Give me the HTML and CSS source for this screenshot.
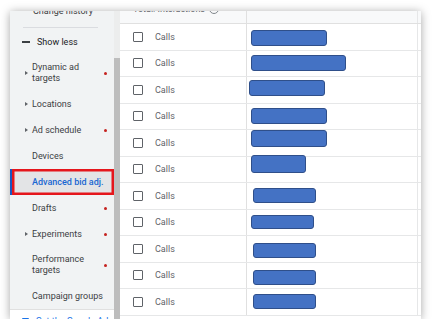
FILE: index.html
```html
<!DOCTYPE html>
<html lang="en">
<head>
  <meta charset="UTF-8">
  <title>Advanced bid adjustments</title>
  <link rel="stylesheet" href="styles.css">
</head>
<body>
  <div class="frame">
    <!-- Left navigation -->
    <nav class="sidenav">
      <ul class="nav-list">
        <li class="nav-item"><span class="nav-text">Change history</span></li>
        <li class="nav-divider"></li>
        <li class="nav-item toggle"><span class="dash"></span><span class="nav-text">Show less</span></li>
        <li class="nav-item"><span class="arrow"></span><span class="nav-text">Dynamic ad targets</span><span class="dot"></span></li>
        <li class="nav-item"><span class="arrow"></span><span class="nav-text">Locations</span></li>
        <li class="nav-item"><span class="arrow"></span><span class="nav-text">Ad schedule</span><span class="dot"></span></li>
        <li class="nav-item"><span class="slot"></span><span class="nav-text">Devices</span></li>
        <li class="nav-item active"><span class="slot"></span><span class="nav-text">Advanced bid adj.</span></li>
        <li class="nav-item"><span class="slot"></span><span class="nav-text">Drafts</span><span class="dot"></span></li>
        <li class="nav-item"><span class="arrow"></span><span class="nav-text">Experiments</span><span class="dot"></span></li>
        <li class="nav-item"><span class="slot"></span><span class="nav-text">Performance targets</span><span class="dot"></span></li>
        <li class="nav-item"><span class="slot"></span><span class="nav-text">Campaign groups</span></li>
      </ul>
      <div class="nav-footer">
        <span class="app-icon"></span>
        <span class="footer-text">Get the Google Ads app</span>
      </div>
    </nav>

    <div class="scrollbar"><div class="thumb"></div></div>

    <!-- Table -->
    <div class="table">
      <div class="table-head">
        <div class="cell-name head-name">Total: Interactions <span class="info">?</span></div>
        <div class="cell-bar"></div>
      </div>
      <div id="rows"></div>
    </div>
  </div>

  <script>
    // [offset-left, offset-top, width, height] of each redacted value
    const bars = [
      [4, 6, 76, 16],
      [4, 4.5, 95, 16],
      [2, 3, 76, 16],
      [4, 4.5, 76, 16],
      [4, 0, 76, 17],
      [4, -1.5, 55, 18],
      [6, 5, 63, 15],
      [4, 5.5, 63, 14],
      [6, 7, 63, 15],
      [6, 7.5, 63, 15],
      [6, 5, 63, 15]
    ];
    const rows = document.getElementById('rows');
    bars.forEach(b => {
      const row = document.createElement('div');
      row.className = 'row';
      row.innerHTML =
        '<div class="cell-name"><span class="checkbox"></span><span class="label">Calls</span></div>' +
        '<div class="cell-bar"><div class="bar" style="margin-left:' + b[0] + 'px;margin-top:' + b[1] +
        'px;width:' + b[2] + 'px;height:' + b[3] + 'px"></div></div>';
      rows.appendChild(row);
    });
  </script>
</body>
</html>
```

FILE: styles.css
```css
html, body {
  margin: 0;
  padding: 0;
  background: #fff;
  font-family: Roboto, 'Liberation Sans', Arial, sans-serif;
  overflow: hidden;
}
.frame {
  margin: 11px 0 0 10px;
  width: 411px;
  height: 308px;
  display: flex;
  overflow: hidden;
  background: #fff;
  box-shadow: 0 1px 9px rgba(0, 0, 0, 0.35);
}
.sidenav {
  width: 104px;
  flex-shrink: 0;
  background: #f1f3f4;
  display: flex;
  flex-direction: column;
  overflow: hidden;
}
.nav-list {
  list-style: none;
  margin: -13px 0 0 0;
  padding: 0;
}
.nav-item {
  display: flex;
  align-items: center;
  min-height: 26px;
  box-sizing: border-box;
  padding: 7px 7px 7px 12px;
  font-size: 9px;
  line-height: 11px;
  color: #3c4043;
}
.nav-item:first-child {
  padding-left: 23px;
}
.nav-text {
  flex: 1;
}
.nav-divider {
  height: 1px;
  margin: 3px 16px 1px 13px;
  background: #dadce0;
}
.slot, .arrow {
  width: 10px;
  flex-shrink: 0;
  align-self: center;
}
.arrow {
  height: 5px;
}
.arrow::before {
  content: '';
  display: block;
  margin-left: 3px;
  width: 0;
  height: 0;
  border-top: 2.5px solid transparent;
  border-bottom: 2.5px solid transparent;
  border-left: 3px solid #5f6368;
}
.dash {
  width: 8px;
  height: 1.5px;
  background: #3c4043;
  margin-right: 7px;
  flex-shrink: 0;
}
.toggle .nav-text {
  color: #202124;
}
.dot {
  width: 3px;
  height: 3px;
  border-radius: 50%;
  background: #c5221f;
  flex-shrink: 0;
}
.nav-item.active {
  padding-left: 10px;
  border-left: 2px solid #1a57c0;
  background: #e3e4e6;
  box-shadow: inset 0 0 0 2.5px #e5161c;
}
.nav-item.active .nav-text {
  color: #1967d2;
  font-weight: 500;
}
.nav-footer {
  flex: 1;
  background: #fff;
  border-top: 1px solid #e0e0e0;
  display: flex;
  align-items: flex-start;
  padding: 6px 0 0 12px;
  font-size: 9px;
  color: #1a73e8;
}
.app-icon {
  width: 8px;
  height: 6px;
  margin: 2px 7px 0 0;
  background: #1a73e8;
  border-radius: 1px;
}
.scrollbar {
  width: 6px;
  flex-shrink: 0;
  background: #eceded;
  display: flex;
  flex-direction: column;
  padding-top: 47px;
}
.thumb {
  flex: 1;
  background: #bdbdbd;
}
.table {
  flex: 1;
  display: flex;
  flex-direction: column;
}
.table-head {
  display: flex;
  height: 30px;
  margin-top: -17px;
  background: #f8f9fa;
  border-bottom: 1px solid #e0e0e0;
  box-sizing: border-box;
}
.head-name {
  align-items: flex-end;
  padding: 0 0 0 15px;
  font-size: 9px;
  line-height: 10px;
  color: #5f6368;
}
.info {
  display: inline-block;
  width: 8px;
  height: 8px;
  margin-left: 4px;
  border: 1px solid #80868b;
  border-radius: 50%;
  font-size: 6px;
  line-height: 8px;
  text-align: center;
  color: #80868b;
}
.row {
  display: flex;
  height: 26.5px;
  box-sizing: border-box;
  border-bottom: 1px solid #e6e7e8;
}
.cell-name {
  width: 127px;
  flex-shrink: 0;
  box-sizing: border-box;
  border-right: 1px solid #e0e0e0;
  display: flex;
  align-items: center;
  padding-left: 13px;
}
.cell-bar {
  width: 171px;
  flex-shrink: 0;
  box-sizing: border-box;
  border-right: 1px solid #e6e7e8;
}
.checkbox {
  width: 10px;
  height: 10px;
  box-sizing: border-box;
  border: 1.5px solid #5f6368;
  border-radius: 1px;
  margin-right: 12px;
}
.label {
  font-size: 9px;
  color: #5f6368;
}
.bar {
  box-sizing: border-box;
  background: #4472c4;
  border: 1px solid #2f4f8a;
  border-radius: 3px;
}
```
